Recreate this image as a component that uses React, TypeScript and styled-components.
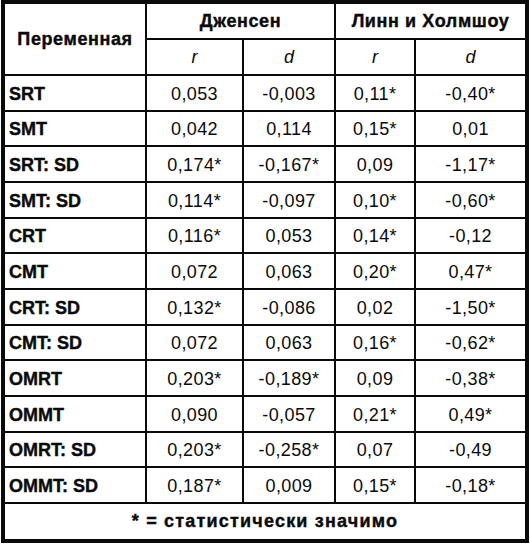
import React from "react";
import styled, { createGlobalStyle } from "styled-components";

const GlobalStyle = createGlobalStyle`
  html, body {
    margin: 0;
    padding: 0;
    background: #ffffff;
  }
  body {
    font-family: "Liberation Sans", Arial, sans-serif;
    color: #0a0a0a;
  }
`;

const ink = "#0a0a0a";

const Frame = styled.div`
  box-sizing: border-box;
  width: 528px;
  margin-left: 1px;
  border: 4px solid ${ink};
  background: #fff;
`;

const Table = styled.table`
  width: 100%;
  border-collapse: collapse;
  border-style: hidden;
  table-layout: fixed;
`;

const HeadRow = styled.tr<{ $h: number }>`
  height: ${(p) => p.$h}px;
`;

const BodyRow = styled.tr`
  height: 35.67px;
`;

const Cell = styled.td`
  border: 2px solid ${ink};
  padding: 2px 0 0;
  text-align: center;
  vertical-align: middle;
  font-size: 18px;
  letter-spacing: 0.4px;
  line-height: 1;
`;

const HeadCell = styled.th`
  border: 2px solid ${ink};
  padding: 0;
  text-align: center;
  vertical-align: middle;
  font-size: 18px;
  font-weight: 700;
  letter-spacing: 0.6px;
  line-height: 1;
  -webkit-text-stroke: 0.4px ${ink};
`;

const SubHead = styled(HeadCell)`
  font-style: italic;
  font-weight: 400;
  font-size: 18px;
  letter-spacing: 0;
  -webkit-text-stroke: 0;
`;

const Label = styled.td`
  border: 2px solid ${ink};
  padding: 2px 0 0 4px;
  text-align: left;
  vertical-align: middle;
  font-size: 18px;
  font-weight: 700;
  line-height: 1;
  -webkit-text-stroke: 0.4px ${ink};
`;

const Footer = styled.td`
  border: 2px solid ${ink};
  padding: 0;
  height: 35px;
  text-align: center;
  vertical-align: middle;
  font-size: 18px;
  font-weight: 700;
  letter-spacing: 1.2px;
  -webkit-text-stroke: 0.4px ${ink};
`;

const rows: [string, string, string, string, string][] = [
  ["SRT", "0,053", "-0,003", "0,11*", "-0,40*"],
  ["SMT", "0,042", "0,114", "0,15*", "0,01"],
  ["SRT: SD", "0,174*", "-0,167*", "0,09", "-1,17*"],
  ["SMT: SD", "0,114*", "-0,097", "0,10*", "-0,60*"],
  ["CRT", "0,116*", "0,053", "0,14*", "-0,12"],
  ["CMT", "0,072", "0,063", "0,20*", "0,47*"],
  ["CRT: SD", "0,132*", "-0,086", "0,02", "-1,50*"],
  ["CMT: SD", "0,072", "0,063", "0,16*", "-0,62*"],
  ["OMRT", "0,203*", "-0,189*", "0,09", "-0,38*"],
  ["OMMT", "0,090", "-0,057", "0,21*", "0,49*"],
  ["OMRT: SD", "0,203*", "-0,258*", "0,07", "-0,49"],
  ["OMMT: SD", "0,187*", "0,009", "0,15*", "-0,18*"],
];

export default function App() {
  return (
    <>
      <GlobalStyle />
      <Frame>
        <Table>
          <colgroup>
            <col style={{ width: 141 }} />
            <col style={{ width: 97 }} />
            <col style={{ width: 92 }} />
            <col style={{ width: 80 }} />
            <col />
          </colgroup>
          <thead>
            <HeadRow $h={35}>
              <HeadCell rowSpan={2}>Переменная</HeadCell>
              <HeadCell colSpan={2}>Дженсен</HeadCell>
              <HeadCell colSpan={2}>Линн и Холмшоу</HeadCell>
            </HeadRow>
            <HeadRow $h={36}>
              <SubHead>r</SubHead>
              <SubHead>d</SubHead>
              <SubHead>r</SubHead>
              <SubHead>d</SubHead>
            </HeadRow>
          </thead>
          <tbody>
            {rows.map((r) => (
              <BodyRow key={r[0]}>
                <Label>{r[0]}</Label>
                <Cell>{r[1]}</Cell>
                <Cell>{r[2]}</Cell>
                <Cell>{r[3]}</Cell>
                <Cell>{r[4]}</Cell>
              </BodyRow>
            ))}
            <tr>
              <Footer colSpan={5}>* = статистически значимо</Footer>
            </tr>
          </tbody>
        </Table>
      </Frame>
    </>
  );
}
